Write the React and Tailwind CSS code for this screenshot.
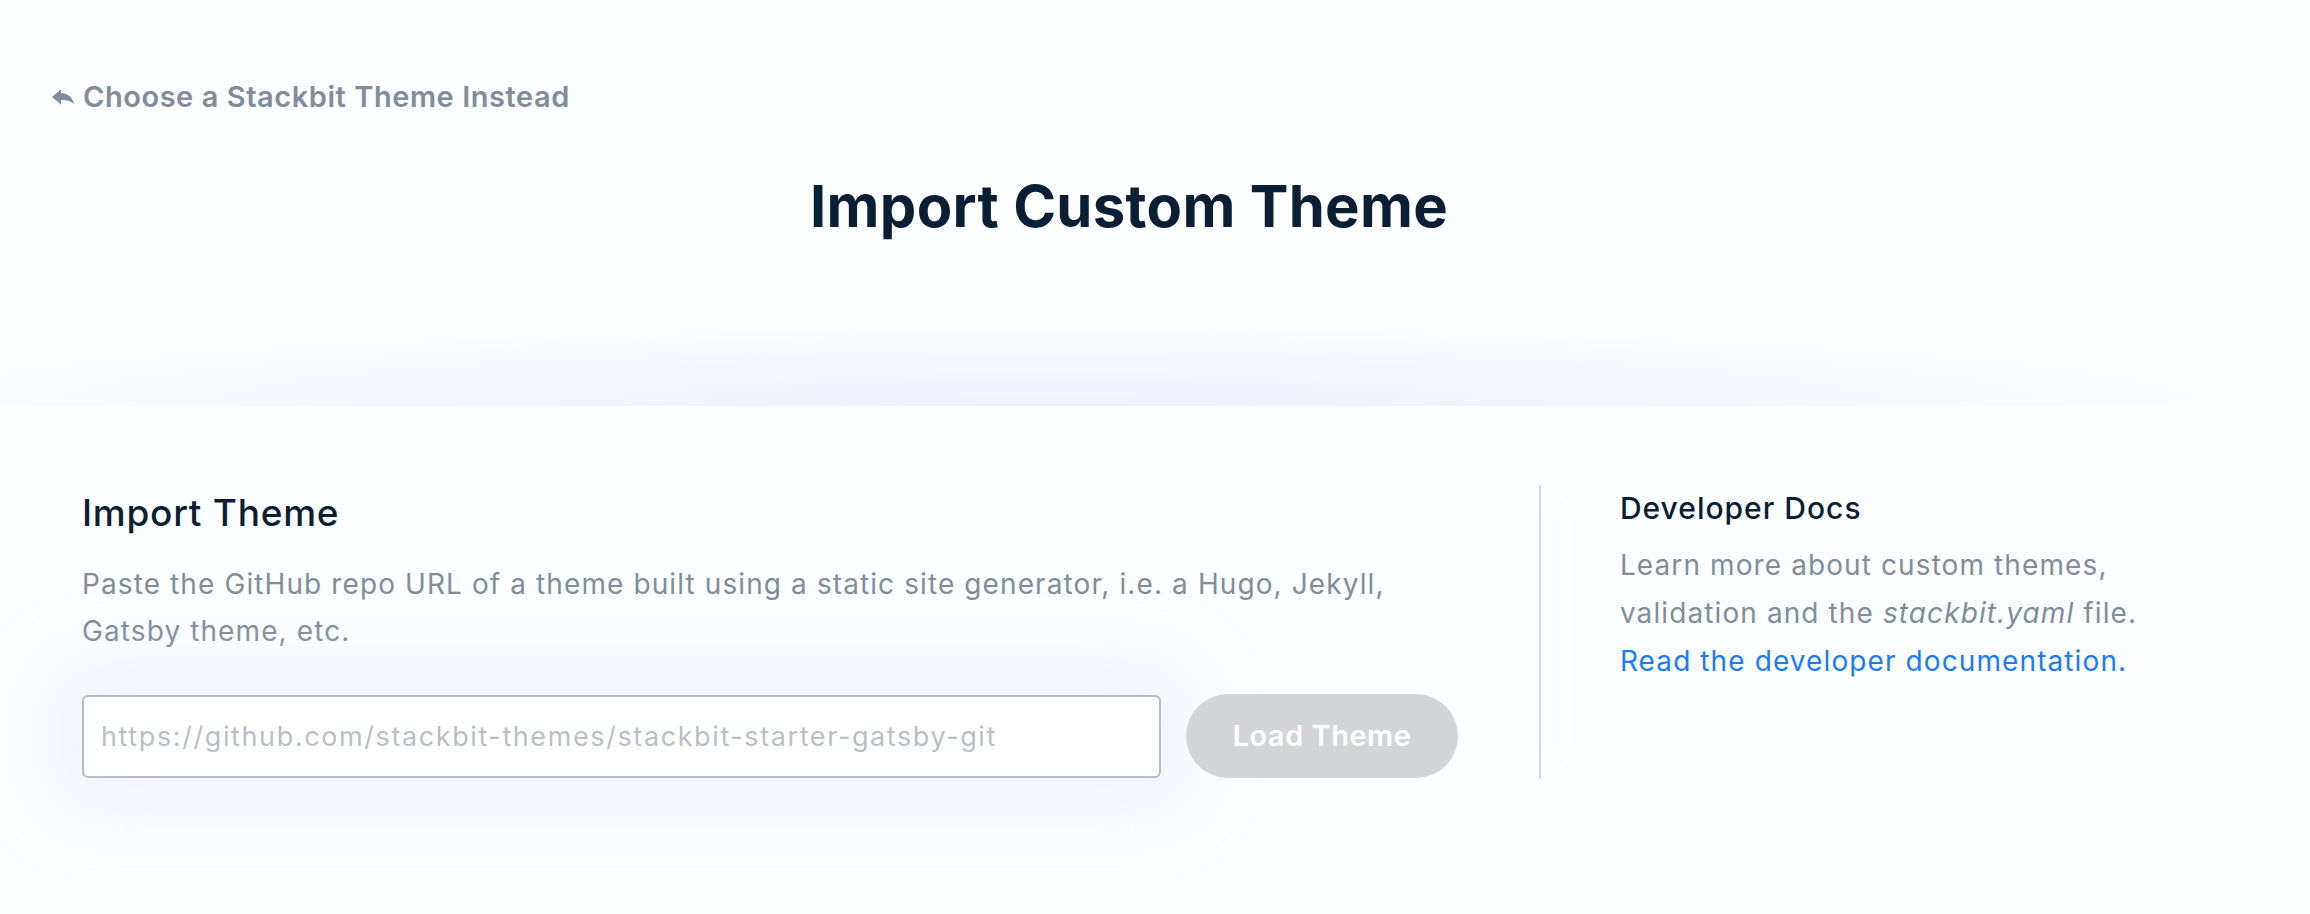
import React from "react";

function BackArrow() {
  return (
    <svg width="22" height="16" viewBox="0 0 22 16" className="shrink-0">
      <path d="M0 8 L9 0.5 L9 4 C15.5 4 20.5 8 22 15.5 C19 11.8 15 11 9 11 L9 15.5 Z" fill="#7f8c99" />
    </svg>
  );
}

export default function App() {
  const font = { fontFamily: "Inter, 'Liberation Sans', sans-serif" };
  return (
    <div className="min-h-[914px] w-full bg-[#fcfdff]" style={font}>
      <header className="h-[406px] bg-[radial-gradient(1250px_85px_at_1050px_100%,#eef1fc,#fcfdff)] pt-[82px]">
        <div className="flex items-center gap-[9px] pl-[52px]">
          <BackArrow />
          <span className="text-[29px] leading-[29px] font-semibold tracking-[0.55px] text-[#808d9a]">
            Choose a Stackbit Theme Instead
          </span>
        </div>
        <h1 className="mt-[60px] pr-[52px] text-center text-[58px] leading-[70px] font-bold tracking-[0.3px] text-[#0a1e34]">
          Import Custom Theme
        </h1>
      </header>

      <main className="flex px-[82px] pt-[80px]">
        <section className="w-[1376px] shrink-0">
          <h2 className="text-[37px] leading-[54px] font-medium tracking-[0.75px] text-[#0a1e34]">Import Theme</h2>
          <p className="mt-[21px] text-[28px] leading-[47px] tracking-[1.1px] text-[#808d9a]">
            Paste the GitHub repo URL of a theme built using a static site generator, i.e. a Hugo, Jekyll,
            <br />
            Gatsby theme, etc.
          </p>
          <div className="mt-[39px] flex items-center gap-[25px]">
            <input
              type="text"
              placeholder="https://github.com/stackbit-themes/stackbit-starter-gatsby-git"
              className="h-[83px] w-[1079px] rounded-[6px] border-2 border-[#b4bdc6] bg-white px-[17px] text-[27px] tracking-[1.6px] text-[#0a1e34] placeholder:text-[#b7bfc8] outline-none shadow-[0_0_70px_22px_rgba(228,234,251,0.5)]"
              style={font}
            />
            <button
              className="h-[84px] w-[272px] rounded-full bg-[#d3d4d6] text-[29px] font-semibold tracking-[0.5px] text-white"
              style={font}
            >
              Load Theme
            </button>
          </div>
        </section>

        <div className="ml-[81px] w-[2px] bg-[#d3d9e3] shadow-[18px_0_40px_rgba(226,232,250,0.6)]" />

        <aside className="ml-[79px] w-[640px]">
          <h3 className="text-[30px] leading-[44px] font-medium tracking-[1px] text-[#0a1e34]">Developer Docs</h3>
          <p className="mt-[11px] text-[28px] leading-[48px] tracking-[1.1px] text-[#808d9a]">
            Learn more about custom themes,
            <br />
            validation and the <em>stackbit.yaml</em> file.
            <br />
            <a href="#" className="text-[#1a7cf5]">Read the developer documentation.</a>
          </p>
        </aside>
      </main>
    </div>
  );
}
